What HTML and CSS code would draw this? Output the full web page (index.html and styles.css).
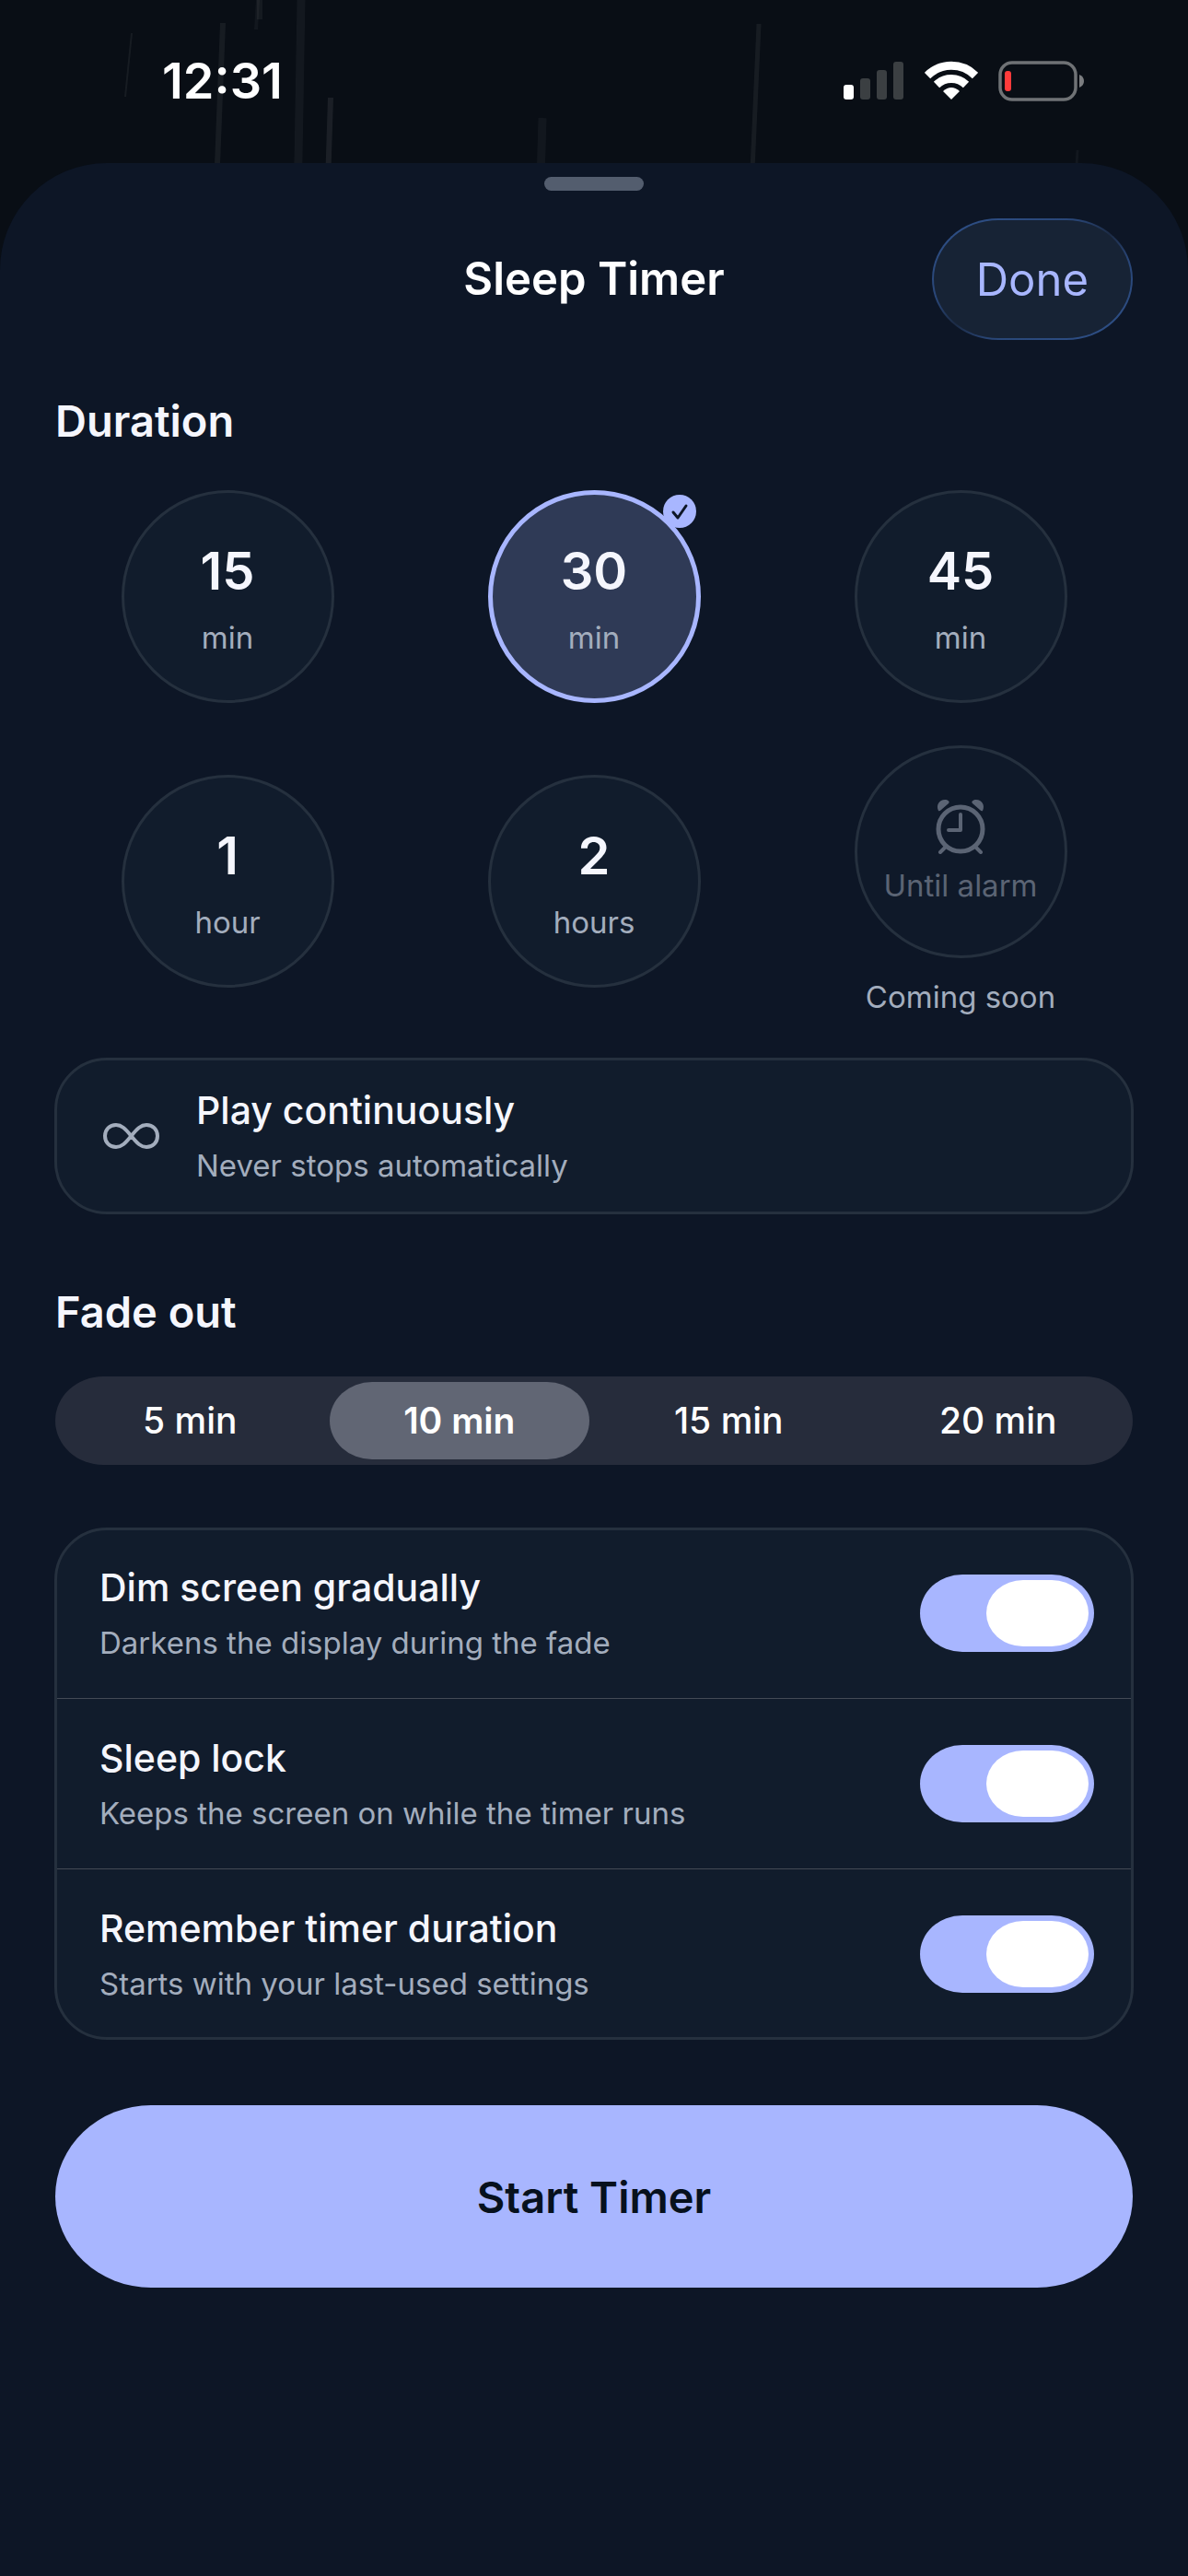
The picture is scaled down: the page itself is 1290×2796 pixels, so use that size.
FILE: index.html
```html
<!DOCTYPE html>
<html lang="en">
<head>
  <meta charset="UTF-8" />
  <meta name="viewport" content="width=device-width, initial-scale=1.0" />
  <title>Sleep Timer</title>
  <link rel="stylesheet" href="styles.css">
</head>
<body>
  <div class="status-bar">
    <!-- rain behind the sheet -->
    <svg class="rain" viewBox="0 0 1290 300" preserveAspectRatio="xMidYMin slice" aria-hidden="true">
      <g stroke="#fff" fill="none">
        <path d="M242 25L234 230" stroke-width="6" opacity=".06" />
        <path d="M327 0L323 230" stroke-width="9" opacity=".045" />
        <path d="M359 106L355 230" stroke-width="6" opacity=".075" />
        <path d="M282 0V21" stroke-width="6" opacity=".05" />
        <path d="M280 0L278 32" stroke-width="4" opacity=".04" />
        <path d="M143 36L136 105" stroke-width="2" opacity=".06" />
        <path d="M589 128L586 230" stroke-width="9" opacity=".04" />
        <path d="M824 26L815 230" stroke-width="5" opacity=".06" />
        <path d="M1170 163L1166 230" stroke-width="3" opacity=".04" />
      </g>
    </svg>
    <span class="clock">12:31</span>
    <div class="status-icons">
      <svg width="66" height="44" viewBox="0 0 66 44" aria-label="Signal">
        <rect x="0" y="26" width="11" height="16" rx="3" fill="#fff" />
        <rect x="18" y="19" width="11" height="23" rx="3" fill="#3b3f42" />
        <rect x="36" y="10" width="11" height="32" rx="3" fill="#3b3f42" />
        <rect x="54" y="1" width="11" height="41" rx="3" fill="#3b3f42" />
      </svg>
      <svg width="58" height="44" viewBox="0 0 58 44" aria-label="Wi-Fi">
        <g stroke="#fff" stroke-width="9" fill="none">
          <path d="M3 16A37 37 0 0 1 55 16" />
          <path d="M13 26A23 23 0 0 1 45 26" />
        </g>
        <path d="M29 42L20 33Q29 25 38 33Z" fill="#fff" />
      </svg>
      <svg width="94" height="44" viewBox="0 0 94 44" aria-label="Battery low">
        <rect x="2" y="2" width="82" height="40" rx="13" fill="none" stroke="#6f7275" stroke-width="3.5" />
        <rect x="7" y="11" width="7" height="22" rx="3" fill="#ff3b3b" />
        <path d="M88 15q5 2 5 7t-5 7z" fill="#7b7d80" />
      </svg>
    </div>
  </div>

  <main class="sheet">
    <div class="grabber"></div>

    <header class="sheet-header">
      <h1>Sleep Timer</h1>
      <button class="done" type="button">Done</button>
    </header>

    <h2 id="duration-title">Duration</h2>
    <div class="durations" role="radiogroup" aria-labelledby="duration-title">
      <label class="duration">
        <input type="radio" name="duration" value="15" />
        <span class="number">15</span>
        <span class="unit">min</span>
      </label>
      <label class="duration">
        <input type="radio" name="duration" value="30" checked />
        <span class="number">30</span>
        <span class="unit">min</span>
        <svg class="check" viewBox="0 0 36 36" aria-hidden="true">
          <circle cx="18" cy="18" r="18" fill="#a8b6ff" />
          <path d="M11 19L16 25L25 12" fill="none" stroke="#0d1626" stroke-width="3" stroke-linecap="round" stroke-linejoin="round" />
        </svg>
      </label>
      <label class="duration">
        <input type="radio" name="duration" value="45" />
        <span class="number">45</span>
        <span class="unit">min</span>
      </label>
      <label class="duration">
        <input type="radio" name="duration" value="60" />
        <span class="number">1</span>
        <span class="unit">hour</span>
      </label>
      <label class="duration">
        <input type="radio" name="duration" value="120" />
        <span class="number">2</span>
        <span class="unit">hours</span>
      </label>
      <div class="upcoming">
        <label class="duration disabled">
          <input type="radio" name="duration" value="alarm" disabled />
          <svg width="60" height="60" viewBox="0 0 60 60" aria-hidden="true">
            <g fill="none" stroke="#5b6474" stroke-linecap="round" stroke-linejoin="round">
              <circle cx="30" cy="33" r="24" stroke-width="5" />
              <path d="M30 17V34H17" stroke-width="4" />
              <path d="M13 53L8 58M47 53L52 58" stroke-width="4" />
            </g>
            <path d="M6 13C3 7 7 1 13 1C16 1 19 3 17 5L9 12Q7 14 6 13Z" fill="#5b6474" />
            <path d="M54 13C57 7 53 1 47 1C44 1 41 3 43 5L51 12Q53 14 54 13Z" fill="#5b6474" />
          </svg>
          <span class="unit">Until alarm</span>
        </label>
        <span class="note">Coming soon</span>
      </div>
    </div>

    <button class="card continuous" type="button">
      <svg width="69" height="36" viewBox="0 0 69 36" aria-hidden="true">
        <path d="M34.500 18C28 10 24 6 18 6C11 6 6 11 6 18S11 30 18 30C24 30 28 26 34.500 18C41 10 45 6 51 6C58 6 63 11 63 18S58 30 51 30C45 30 41 26 34.500 18Z" fill="none" stroke="#a3adbd" stroke-width="4" />
      </svg>
      <span class="text">
        <span class="title">Play continuously</span>
        <span class="subtitle">Never stops automatically</span>
      </span>
    </button>

    <h2 id="fade-title" class="fade-title">Fade out</h2>
    <div class="segments" role="radiogroup" aria-labelledby="fade-title">
      <label class="segment"><input type="radio" name="fade" value="5" />5 min</label>
      <label class="segment"><input type="radio" name="fade" value="10" checked />10 min</label>
      <label class="segment"><input type="radio" name="fade" value="15" />15 min</label>
      <label class="segment"><input type="radio" name="fade" value="20" />20 min</label>
    </div>

    <div class="card settings">
      <label class="setting">
        <span class="text">
          <span class="title">Dim screen gradually</span>
          <span class="subtitle">Darkens the display during the fade</span>
        </span>
        <input class="switch" type="checkbox" role="switch" checked />
      </label>
      <label class="setting">
        <span class="text">
          <span class="title">Sleep lock</span>
          <span class="subtitle">Keeps the screen on while the timer runs</span>
        </span>
        <input class="switch" type="checkbox" role="switch" checked />
      </label>
      <label class="setting">
        <span class="text">
          <span class="title">Remember timer duration</span>
          <span class="subtitle">Starts with your last-used settings</span>
        </span>
        <input class="switch" type="checkbox" role="switch" checked />
      </label>
    </div>

    <button class="start" type="button">Start Timer</button>
  </main>
</body>
</html>
```
FILE: styles.css
```css
:root {
  --bg: #090e15;
  --sheet: #0d1626;
  --card: #111c2c;
  --line: #25303e;
  --text: #f5f6fd;
  --muted: #a3adbd;
  --accent: #a8b6ff;
}
* {
  margin: 0;
  padding: 0;
  box-sizing: border-box;
}
body {
  display: flex;
  flex-direction: column;
  min-height: 100vh;
  font-family: Inter, "Liberation Sans", sans-serif;
  background: var(--bg);
  color: var(--text);
}
button {
  font-family: inherit;
  color: inherit;
  border: none;
  cursor: pointer;
}

/* status bar */
.status-bar {
  display: flex;
  justify-content: space-between;
  align-items: center;
  height: 177px;
  padding: 0 112px 2px 176px;
}
.rain {
  position: absolute;
  top: 0;
  left: 0;
  width: 100%;
  height: 300px;
  z-index: -1;
}
.clock {
  font-size: 54px;
  line-height: 64px;
  font-weight: 600;
  color: #fff;
}
.status-icons {
  display: flex;
  align-items: center;
  gap: 22px;
}

/* sheet */
.sheet {
  flex: 1;
  display: flex;
  flex-direction: column;
  padding: 15px 60px 60px;
  background: var(--sheet);
  border-radius: 116px 116px 0 0;
}
.grabber {
  align-self: center;
  width: 108px;
  height: 15px;
  border-radius: 8px;
  background: #535d6e;
}
.sheet-header {
  display: grid;
  grid-template-columns: 1fr auto 1fr;
  align-items: center;
  margin: 30px 0 60px;
}
h1 {
  grid-column: 2;
  font-size: 49px;
  line-height: 60px;
  font-weight: 600;
  color: #fff;
}
.done {
  justify-self: end;
  height: 132px;
  padding: 0 46px;
  font-size: 49px;
  color: var(--accent);
  border: 2px solid transparent;
  border-radius: 72px / 66px;
  background:
    linear-gradient(#172335, #172335) padding-box,
    linear-gradient(150deg, #2f5189, #294677 35%, #1c2b45 50%, #294677 65%, #2f5189) border-box;
}
h2 {
  font-size: 47px;
  line-height: 56px;
  font-weight: 600;
}

/* duration */
.durations {
  display: grid;
  grid-template-columns: repeat(3, 1fr);
  gap: 46px 24px;
  align-items: center;
  justify-items: center;
  margin: 47px 0 45px;
}
.duration {
  position: relative;
  display: flex;
  flex-direction: column;
  align-items: center;
  justify-content: center;
  gap: 12px;
  width: 231px;
  height: 231px;
  border: 3px solid var(--line);
  border-radius: 50%;
  background: var(--card);
  cursor: pointer;
}
.duration input,
.segment input {
  position: absolute;
  opacity: 0;
}
.duration:has(input:checked) {
  border: 5px solid var(--accent);
  background: #2f3a56;
}
.number {
  font-size: 56px;
  line-height: 76px;
  font-weight: 600;
}
.unit,
.note,
.subtitle {
  font-size: 33px;
  line-height: 44px;
  color: var(--muted);
}
.check {
  position: absolute;
  top: 0;
  right: 0;
  width: 36px;
  height: 36px;
}
.duration.disabled {
  background: #0f1929;
  cursor: default;
}
.disabled .unit {
  color: #5b6474;
}
.upcoming {
  display: flex;
  flex-direction: column;
  align-items: center;
  gap: 20px;
}

/* cards */
.card {
  background: var(--card);
  outline: 3px solid var(--line);
  outline-offset: -2px;
  border-radius: 56px;
}
.text {
  display: flex;
  flex-direction: column;
  gap: 12px;
  text-align: left;
}
.title {
  font-size: 41px;
  line-height: 52px;
  font-weight: 500;
}
.continuous {
  display: flex;
  align-items: center;
  gap: 36px;
  padding: 30px 48px;
}

/* fade out */
.fade-title {
  margin: 79px 0 42px;
}
.segments {
  display: flex;
  padding: 6px 0;
  border-radius: 52px / 48px;
  background: #262c3b;
}
.segment {
  flex: 1;
  margin: 0 5px;
  border-radius: 46px / 42px;
  font-size: 39px;
  line-height: 84px;
  font-weight: 500;
  text-align: center;
  color: #fff;
  cursor: pointer;
}
.segment:has(input:checked) {
  background: #616674;
  font-weight: 600;
}

/* settings */
.settings {
  margin: 69px 0 72px;
}
.setting {
  display: flex;
  justify-content: space-between;
  align-items: center;
  padding: 38px 42px 38px 48px;
  cursor: pointer;
}
.setting + .setting {
  border-top: 1px solid #434a55;
}
.switch {
  appearance: none;
  flex: none;
  display: flex;
  width: 189px;
  height: 84px;
  padding: 6px;
  border-radius: 46px / 42px;
  background: #39414f;
}
.switch::before {
  content: "";
  width: 111px;
  border-radius: 40px / 36px;
  background: #fff;
}
.switch:checked {
  justify-content: flex-end;
  background: var(--accent);
}

.start {
  height: 198px;
  border-radius: 104px / 99px;
  font-size: 47px;
  font-weight: 600;
  color: #07111d;
  background: var(--accent);
}
```
